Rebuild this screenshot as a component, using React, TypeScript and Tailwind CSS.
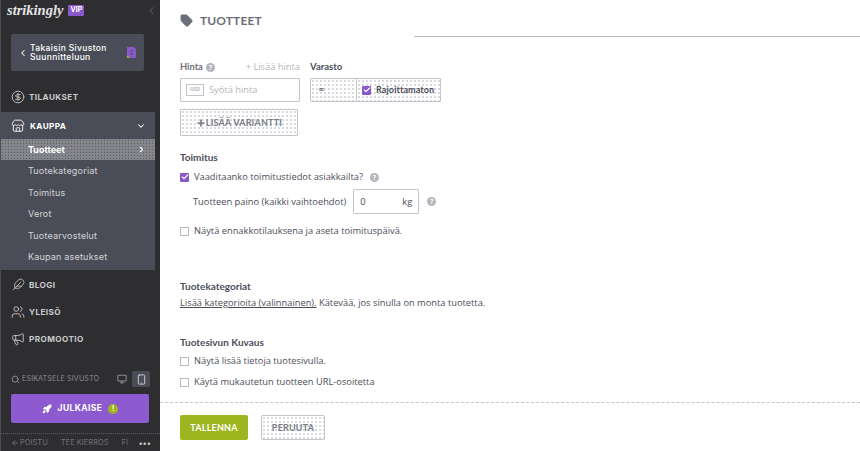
import React from 'react';
import {
  ArrowLeft,
  Check,
  ChevronDown,
  ChevronLeft,
  ChevronRight,
  CircleDollarSign,
  Feather,
  Megaphone,
  Monitor,
  Plus,
  Rocket,
  Search,
  Smartphone,
  Store,
  Tag,
  Users,
} from 'lucide-react';

const dither =
  'bg-[radial-gradient(#d6d7dc_0.7px,transparent_0.8px)] bg-[length:4px_4px]';

const Help = () => (
  <span className="flex h-[9px] w-[9px] items-center justify-center rounded-full bg-[#b4b6bc] text-[7px] font-bold leading-none text-white">
    ?
  </span>
);

const Box = ({ checked = false }: { checked?: boolean }) =>
  checked ? (
    <span className="flex h-[9px] w-[9px] shrink-0 items-center justify-center rounded-[1px] bg-[#8b58c9]">
      <Check className="h-[8px] w-[8px] text-white" strokeWidth={3.5} />
    </span>
  ) : (
    <span className="h-[9px] w-[9px] shrink-0 border border-[#b9bac0] bg-white" />
  );

const NavItem = ({ icon, label }: { icon: React.ReactNode; label: string }) => (
  <div className="flex h-[27px] items-center pl-[10px] text-[#c9cace]">
    <span className="flex w-[14px] justify-center">{icon}</span>
    <span className="ml-[4px] text-[8.2px] font-bold tracking-[0.4px]">{label}</span>
  </div>
);

const subItems = ['Tuotekategoriat', 'Toimitus', 'Verot', 'Tuotearvostelut', 'Kaupan asetukset'];

const Sidebar = () => (
  <aside className="flex h-[451px] w-[160px] shrink-0 flex-col border-l border-[#4a4d57] bg-[#2e2e30] font-['Inter',sans-serif]">
    <div className="flex h-[34px] items-start pr-[3px] pt-[2px]">
      <span className="ml-[6px] font-['Liberation_Serif',serif] text-[14.5px] font-bold italic leading-[17px] text-[#e4e4e6]">
        strikingly
      </span>
      <span className="ml-[5px] mt-[3px] flex h-[11px] w-[16px] items-center justify-center rounded-[1px] bg-[#8b58c9] text-[7px] font-bold text-white">
        VIP
      </span>
      <ChevronLeft className="ml-auto mt-[3px] h-[11px] w-[11px] text-[#6b6d75]" />
    </div>
    <div className="ml-[10px] flex h-[38px] w-[133px] items-center rounded-[2px] bg-[#4a4d57] pl-[7px] pr-[7px] text-white">
      <ChevronLeft className="h-[10px] w-[10px]" strokeWidth={2.5} />
      <span className="ml-[2px] text-[8.5px] font-medium leading-[9px] tracking-[0.35px]">
        Takaisin Sivuston
        <br />
        Suunnitteluun
      </span>
      <svg viewBox="0 0 10 11" className="ml-auto h-[11px] w-[10px]">
        <path d="M0 0h7l2 2v9H0z" fill="#8b58c9" />
        <path d="M0 8l3 3H0z" fill="#9db51f" />
        <path d="M3 4h3M3 7h3" stroke="#4a4d57" strokeWidth="1" />
      </svg>
    </div>
    <div className="mt-[12px]">
      <NavItem icon={<CircleDollarSign className="h-[14px] w-[14px]" strokeWidth={1.5} />} label="TILAUKSET" />
    </div>
    <div className="mt-[2px] w-[154px] bg-[#4a4d57]">
      <div className="flex h-[27px] items-center pl-[10px] text-white">
        <Store className="h-[14px] w-[14px]" strokeWidth={1.5} />
        <span className="ml-[5px] text-[8.2px] font-bold tracking-[0.4px]">KAUPPA</span>
        <ChevronDown className="ml-auto mr-[9px] h-[10px] w-[10px]" strokeWidth={2.5} />
      </div>
      <div className="flex h-[21px] items-center bg-[#85868c] bg-[radial-gradient(#5d5f68_0.7px,transparent_0.8px)] bg-[length:3px_3px] pl-[27px] pr-[9px] text-[9px] font-bold text-white">
        Tuotteet
        <ChevronRight className="ml-auto h-[9px] w-[9px]" strokeWidth={3} />
      </div>
      <div className="pb-[3px]">
        {subItems.map((s) => (
          <div key={s} className="flex h-[21.4px] items-center pl-[27px] text-[9px] tracking-[0.2px] text-[#d4d5d8]">
            {s}
          </div>
        ))}
      </div>
    </div>
    <div className="mt-[1px]">
      <NavItem icon={<Feather className="h-[13px] w-[13px]" strokeWidth={1.5} />} label="BLOGI" />
      <NavItem icon={<Users className="h-[14px] w-[14px]" strokeWidth={1.5} />} label="YLEISÖ" />
      <NavItem icon={<Megaphone className="h-[14px] w-[14px]" strokeWidth={1.5} />} label="PROMOOTIO" />
    </div>
    <div className="mt-[19px] flex h-[16px] items-center pl-[10px] pr-[10px] text-[#8a8c93]">
      <Search className="h-[9px] w-[9px]" strokeWidth={2.5} />
      <span className="ml-[2px] text-[7.2px] tracking-[0.1px]">ESIKATSELE SIVUSTO</span>
      <Monitor className="ml-auto mr-[5px] h-[10px] w-[10px]" strokeWidth={2.5} />
      <span className="flex h-[16px] w-[18px] items-center justify-center rounded-[2px] bg-[#4a4d57] text-[#d4d5d8]">
        <Smartphone className="h-[11px] w-[11px]" />
      </span>
    </div>
    <div className="ml-[10px] mt-[7px] flex h-[29px] w-[138px] items-center justify-center rounded-[2px] bg-[#8d5ad0] text-[8.5px] font-bold tracking-[0.4px] text-white">
      <Rocket className="mr-[6px] h-[10px] w-[10px] fill-white" />
      JULKAISE
      <span className="ml-[6px] flex h-[10px] w-[10px] items-center justify-center rounded-full bg-[#9db51f] text-[7px] leading-none">
        !
      </span>
    </div>
    <div className="mt-[10px] flex h-[18px] items-center border-t border-dotted border-[#5b5d65] pl-[10px] pr-[9px] text-[7.5px] text-[#6f7179]">
      <ArrowLeft className="h-[8px] w-[8px]" strokeWidth={2.5} />
      <span className="ml-[1px]">POISTU</span>
      <span className="ml-[13px]">TEE KIERROS</span>
      <span className="ml-[13px]">FI</span>
      <span className="ml-auto text-[8px] font-bold leading-none tracking-[0.3px] text-[#c4c5c9]">•••</span>
    </div>
  </aside>
);

export default function App() {
  return (
    <div className="flex h-[451px] w-[860px] overflow-hidden bg-white font-['Open_Sans',sans-serif] text-[#4c4e58]">
      <Sidebar />
      <main className="flex min-w-0 flex-1 flex-col">
        <div className="relative h-[37px] shrink-0">
          <div className="flex items-center pl-[20px] pt-[13px]">
            <Tag className="h-[13px] w-[13px] fill-[#6c6e78] text-[#6c6e78]" />
            <span className="ml-[7px] font-['Lato',sans-serif] text-[12px] font-bold leading-[15px] tracking-[0.1px] text-[#6c6e78]">
              TUOTTEET
            </span>
          </div>
          <div className="absolute bottom-0 right-0 h-px w-[446px] bg-[#b9bac2]" />
        </div>

        <div className="flex-1 overflow-hidden pl-[20px]">
          <div className="mt-[25px] flex">
            <div className="w-[120px]">
              <div className="flex h-[10px] items-center text-[9.3px] leading-none">
                <span className="mr-[3px] font-['Lato',sans-serif] font-bold text-[#6f717a]">Hinta</span>
                <Help />
                <span className="ml-auto text-[#b4b6bc]">+ Lisää hinta</span>
              </div>
              <div className="mt-[6px] flex h-[24px] items-center rounded-[1px] border border-[#c4c5ca] pl-[5px]">
                <span className="flex h-[12px] w-[18px] items-center justify-center border border-[#c4c5ca] text-[5px] font-bold text-[#b4b6bc]">
                  USD
                </span>
                <span className="ml-[5px] text-[9.3px] text-[#b4b6bc]">Syötä hinta</span>
              </div>
              <div className={`mt-[7px] flex h-[27px] w-[118px] items-center justify-center rounded-[1px] border border-[#c4c5ca] font-['Lato',sans-serif] text-[9px] font-bold tracking-[0.2px] text-[#7a7c85] ${dither}`}>
                <Plus className="h-[10px] w-[10px]" strokeWidth={4} />
                LISÄÄ VARIANTTI
              </div>
            </div>
            <div className="ml-[10px]">
              <div className="flex h-[10px] items-center font-['Lato',sans-serif] text-[9.5px] font-bold leading-none text-[#4c4e58]">
                Varasto
              </div>
              <div className="mt-[6px] flex h-[24px] w-[131px] rounded-[1px] border border-[#c4c5ca]">
                <span className={`flex w-[46px] items-center border-r border-[#c4c5ca] pl-[7px] font-['DejaVu_Sans',sans-serif] text-[8px] ${dither}`}>
                  ∞
                </span>
                <span className={`flex flex-1 items-center pl-[5px] ${dither}`}>
                  <Box checked />
                  <span className="ml-[5px] font-['Lato',sans-serif] text-[9px] font-bold tracking-[0.1px] text-[#4c4e58]">Rajoittamaton</span>
                </span>
              </div>
            </div>
          </div>

          <h3 className="mt-[15px] font-['Lato',sans-serif] text-[10px] font-bold leading-[12px] text-[#4c4e58]">Toimitus</h3>
          <div className="mt-[8px] flex h-[12px] items-center text-[9.3px]">
            <Box checked />
            <span className="ml-[5px]">Vaaditaanko toimitustiedot asiakkailta?</span>
            <span className="ml-[7px]"><Help /></span>
          </div>
          <div className="mt-[6px] flex h-[25px] items-center pl-[13px] text-[9.3px]">
            Tuotteen paino (kaikki vaihtoehdot)
            <span className="ml-[7px] flex h-[25px] w-[66px] items-center justify-between rounded-[1px] border border-[#c4c5ca] px-[6px]">
              <span>0</span>
              <span>kg</span>
            </span>
            <span className="ml-[8px]"><Help /></span>
          </div>
          <div className="mt-[11px] flex h-[12px] items-center text-[9.3px]">
            <Box />
            <span className="ml-[5px]">Näytä ennakkotilauksena ja aseta toimituspäivä.</span>
          </div>

          <h3 className="mt-[43px] font-['Lato',sans-serif] text-[10px] font-bold leading-[12px]">Tuotekategoriat</h3>
          <p className="mt-[4px] text-[9.3px] leading-[13px]">
            <span className="underline">Lisää kategorioita (valinnainen).</span> Kätevää, jos sinulla on monta tuotetta.
          </p>

          <h3 className="mt-[27px] font-['Lato',sans-serif] text-[10px] font-bold leading-[12px]">Tuotesivun Kuvaus</h3>
          <div className="mt-[7px] flex h-[12px] items-center text-[9.3px]">
            <Box />
            <span className="ml-[5px]">Näytä lisää tietoja tuotesivulla.</span>
          </div>
          <div className="mt-[9px] flex h-[12px] items-center text-[9.3px]">
            <Box />
            <span className="ml-[5px]">Käytä mukautetun tuotteen URL-osoitetta</span>
          </div>
        </div>

        <div className="flex h-[49px] shrink-0 items-start gap-[13px] border-t border-dashed border-[#c4c5ca] pl-[20px] pt-[12px] font-['Lato',sans-serif] text-[9px] font-bold tracking-[0.2px]">
          <span className="flex h-[25px] w-[68px] items-center justify-center rounded-[2px] bg-[#9db51f] text-white">TALLENNA</span>
          <span className={`flex h-[25px] w-[64px] items-center justify-center rounded-[2px] border border-[#c4c5ca] text-[#7a7c85] ${dither}`}>PERUUTA</span>
        </div>
      </main>
    </div>
  );
}
